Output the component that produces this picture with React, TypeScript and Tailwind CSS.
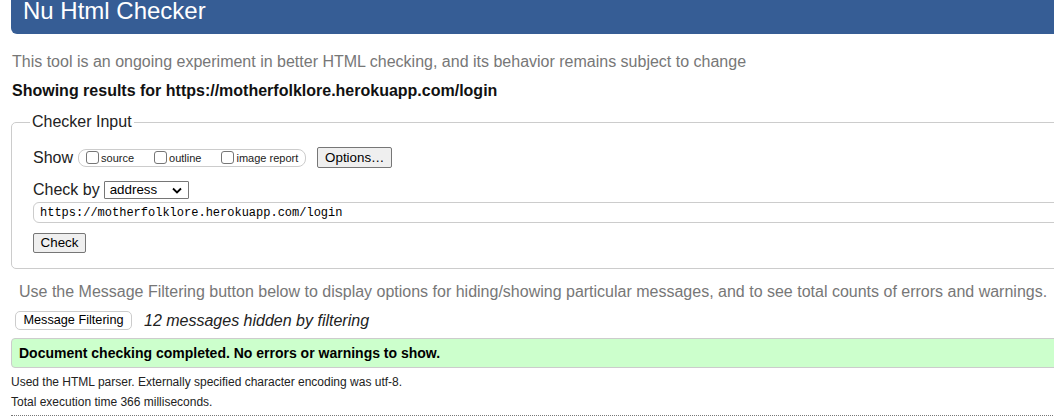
import React from "react";

function Check({ label }: { label: string }) {
  return (
    <span className="flex items-center gap-[2px] shrink-0 whitespace-nowrap">
      <span className="w-[13px] h-[13px] shrink-0 border border-[#767676] rounded-[3px] bg-white box-border" />
      <span className="text-[11px] leading-[13px] text-[#222] mt-[2px] whitespace-nowrap">{label}</span>
    </span>
  );
}

export default function App() {
  return (
    <div
      className="w-[1054px] h-[417px] overflow-hidden bg-white text-black"
      style={{ fontFamily: '"Liberation Sans", Arial, sans-serif' }}
    >
      <div className="flex flex-col">
        <div className="ml-[11px] h-[34px] w-[1100px] shrink-0 bg-[#365d95] rounded-bl-[6px] pl-[12px] text-white text-[24px] leading-[22px]">
          Nu Html Checker
        </div>
        <div className="mt-[19px] ml-[12px] text-[16px] leading-[18px] text-[#777]">
          This tool is an ongoing experiment in better HTML checking, and its behavior remains subject to change
        </div>
        <div className="mt-[11px] ml-[12px] text-[16px] leading-[18px] font-bold text-[#111]">
          Showing results for https://motherfolklore.herokuapp.com/login
        </div>

        <fieldset className="mt-[13px] ml-[11px] w-[1100px] shrink-0 border border-[#ccc] rounded-[5px] pl-[21px] pt-0 pb-[15px]">
          <legend className="text-[16px] leading-[18px] px-[2px] -ml-[3px] text-[#222]">Checker Input</legend>

          <div className="mt-[16px] h-[21px] flex items-center">
            <span className="text-[16px] leading-[18px] text-[#222]">Show</span>
            <div className="ml-[5px] h-[18px] shrink-0 box-border border border-[#ccc] rounded-[8px] flex items-center pl-[7px] pr-[7px] gap-[20px]">
              <Check label="source" />
              <Check label="outline" />
              <Check label="image report" />
            </div>
            <div className="ml-[11px] w-[75px] h-[21px] shrink-0 box-border border border-[#767676] rounded-[2px] bg-[#efefef] flex items-center justify-center text-[13.33px] text-black">
              Options…
            </div>
          </div>

          <div className="mt-[13px] h-[18px] flex items-center">
            <span className="text-[16px] leading-[18px] text-[#222]">Check by</span>
            <div className="ml-[4px] w-[85px] h-[18px] box-border border border-[#767676] rounded-[1px] bg-white flex items-center pl-[5px] pr-[6px] justify-between">
              <span className="text-[13.33px] leading-[16px] text-black">address</span>
              <svg width="10" height="7" viewBox="0 0 10 7">
                <path d="M1 1.5 L5 5.5 L9 1.5" fill="none" stroke="#000" strokeWidth="1.8" />
              </svg>
            </div>
          </div>

          <div
            className="mt-[3px] h-[21px] w-[1100px] box-border border border-[#ccc] rounded-[6px] pl-[6px] flex items-center text-[12px] text-black"
            style={{ fontFamily: '"Liberation Mono", "DejaVu Sans Mono", monospace' }}
          >
            https://motherfolklore.herokuapp.com/login
          </div>

          <div className="mt-[10px] w-[53px] h-[20px] box-border border border-[#767676] rounded-[2px] bg-[#efefef] flex items-center justify-center text-[13.33px] text-black">
            Check
          </div>
        </fieldset>

        <div className="mt-[14px] ml-[19px] text-[16px] leading-[18px] text-[#777] whitespace-nowrap">
          Use the Message Filtering button below to display options for hiding/showing particular messages, and to see total counts of errors and warnings.
        </div>

        <div className="mt-[10px] ml-[15px] h-[19px] flex items-center">
          <div className="w-[117px] h-[19px] box-border border border-[#ccc] rounded-[5px] bg-white flex items-center justify-center text-[12.7px] text-black">
            Message Filtering
          </div>
          <span className="ml-[12px] text-[16px] leading-[18px] italic text-[#222]">12 messages hidden by filtering</span>
        </div>

        <div className="mt-[8px] ml-[11px] w-[1100px] h-[30px] shrink-0 box-border border border-[#ccc] rounded-[4px] bg-[#ccffcc] pl-[7px] text-[14px] leading-[28px] font-bold text-black">
          Document checking completed. No errors or warnings to show.
        </div>

        <div className="mt-[4px] ml-[11px] text-[12px] leading-[20px] text-[#222]">
          Used the HTML parser. Externally specified character encoding was utf-8.
        </div>
        <div className="ml-[11px] text-[12px] leading-[20px] text-[#222]">
          Total execution time 366 milliseconds.
        </div>
        <div className="mt-[3px] ml-[11px] w-[1100px] shrink-0 border-t border-dotted border-[#777]" />
      </div>
    </div>
  );
}
